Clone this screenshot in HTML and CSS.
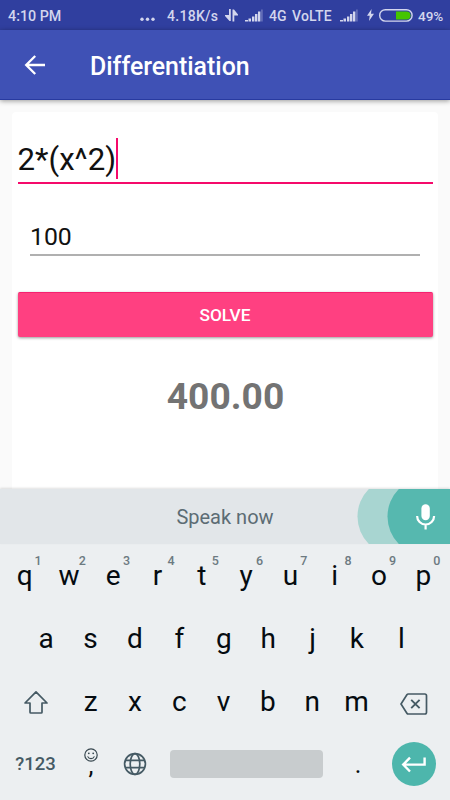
FILE: index.html
```html
<!DOCTYPE html>
<html lang="en">
<head>
<meta charset="utf-8">
<title>Differentiation</title>
<link rel="stylesheet" href="styles.css">
</head>
<body>
<div class="phone">
  <header class="status">
    <span class="clock">4:10 PM</span>
    <svg class="dots" width="15" height="5" viewBox="0 0 15 5"><circle cx="2" cy="2.3" r="1.7"/><circle cx="7.5" cy="2.3" r="1.7"/><circle cx="13" cy="2.3" r="1.7"/></svg>
    <span class="speed">4.18K/s</span>
    <svg class="updown" width="14" height="13" viewBox="0 0 14 13"><path d="M4 0h1.800v12H4.500L0 7V6h4zM7.500 12.500h1.800V6.500H13v-1L9 .5H7.500z"/></svg>
    <svg class="signal" width="18" height="13" viewBox="0 0 18 13"><path d="M0 11h3v1.500H0zM3.500 9.500h2.500v3H3.500zM7 7.500h2.400v5H7zM10 5h2.400v7.500H10zM13 2.500h2.400v10H13z"/><path class="dim" d="M16 .5h1.800v12H16z"/></svg>
    <span class="net">4G</span>
    <span class="volte">VoLTE</span>
    <svg class="signal" width="18" height="13" viewBox="0 0 18 13"><path d="M0 11h3v1.500H0zM3.500 9.500h2.500v3H3.500zM7 7.500h2.400v5H7zM10 5h2.400v7.500H10zM13 2.500h2.400v10H13z"/><path class="dim" d="M16 .5h1.800v12H16z"/></svg>
    <svg class="bolt" width="7" height="12" viewBox="0 0 7 12"><path d="M4.600 0L0 6.800h2.700L2 12l5-7.200H4z"/></svg>
    <svg class="battery" width="34" height="13" viewBox="0 0 34 13"><rect x=".7" y=".7" width="32.400" height="11.400" rx="5.700" fill="none" stroke="#d3d6ed" stroke-width="1.400"/><path d="M17 2.400h10.500a4 4 0 0 1 0 8H17z" fill="#45c500"/></svg>
    <span class="percent">49%</span>
  </header>

  <div class="toolbar">
    <svg class="back" width="22" height="22" viewBox="0 0 22 22"><path d="M21 11H2.500M11.200 2l-9 9 9 9" fill="none" stroke="#fff" stroke-width="2.300"/></svg>
    <h1>Differentiation</h1>
  </div>

  <main>
    <section class="card">
      <div class="field expr"><span>2*(x^2)</span><i class="caret"></i></div>
      <div class="field value"><span>100</span></div>
      <button class="solve">SOLVE</button>
      <output class="result">400.00</output>
    </section>
  </main>

  <div class="voice">
    <svg class="mic" width="93" height="55" viewBox="0 0 93 55"><circle cx="39.500" cy="27.500" r="39" fill="#a8d5d1"/><circle cx="69.500" cy="27.500" r="39" fill="#56b8af"/><rect x="64.400" y="15.200" width="8.400" height="16" rx="4.200" fill="#fff"/><path d="M60.100 27a8.500 8.500 0 0 0 17 0M68.600 35.500v5" fill="none" stroke="#fff" stroke-width="2.200"/></svg>
    <span>Speak now</span>
  </div>

  <div class="keyboard">
    <div class="keys top">
      <b>q<sup>1</sup></b><b>w<sup>2</sup></b><b>e<sup>3</sup></b><b>r<sup>4</sup></b><b>t<sup>5</sup></b><b>y<sup>6</sup></b><b>u<sup>7</sup></b><b>i<sup>8</sup></b><b>o<sup>9</sup></b><b>p<sup>0</sup></b>
    </div>
    <div class="keys home"><b>a</b><b>s</b><b>d</b><b>f</b><b>g</b><b>h</b><b>j</b><b>k</b><b>l</b></div>
    <div class="keys lower">
      <b><svg width="26" height="25" viewBox="0 0 26 25"><path d="M13 1.800L2 13h5v9.200q0 .8.8.8h10.400q.8 0 .8-.8V13h5z" fill="none" stroke="#455a64" stroke-width="1.700" stroke-linejoin="round"/></svg></b>
      <b>z</b><b>x</b><b>c</b><b>v</b><b>b</b><b>n</b><b>m</b>
      <b><svg width="28" height="22" viewBox="0 0 28 22"><path d="M8.300 1h16.500q1.700 0 1.700 1.700v16.600q0 1.700-1.700 1.700H8.300q-.9 0-1.400-.8L1 11l5.900-9.200Q7.400 1 8.300 1z" fill="none" stroke="#455a64" stroke-width="1.700"/><path d="M11.200 6.800l8.400 8.400m0-8.400l-8.400 8.400" stroke="#455a64" stroke-width="1.900"/></svg></b>
    </div>
    <div class="keys bottom">
      <span class="sym">?123</span>
      <span class="comma"><svg width="14" height="14" viewBox="0 0 14 14"><circle cx="7" cy="7" r="6.200" fill="none" stroke="#37474f" stroke-width="1.200"/><circle cx="4.800" cy="5.300" r=".9" fill="#37474f"/><circle cx="9.200" cy="5.300" r=".9" fill="#37474f"/><path d="M3.600 8.400a3.700 3.700 0 0 0 6.800 0" fill="none" stroke="#37474f" stroke-width="1.100"/></svg><span>,</span></span>
      <svg class="globe" width="24" height="24" viewBox="0 0 24 24" fill="none" stroke="#455a64" stroke-width="1.700"><circle cx="12" cy="12" r="10.400"/><ellipse cx="12" cy="12" rx="4.800" ry="10.400"/><path d="M2.200 8.300h19.600M2.200 15.700h19.600"/></svg>
      <span class="space"></span>
      <span class="period">.</span>
      <span class="enter"><svg width="26" height="18" viewBox="0 0 26 18"><path d="M23.600 2.500v7.100H3.500M9 2.700L2.200 9.600 9 16.500" fill="none" stroke="#fff" stroke-width="2.400"/></svg></span>
    </div>
  </div>
</div>
</body>
</html>
```
FILE: styles.css
```css
* { box-sizing: border-box; }
body { margin: 0; font-family: Roboto, "Liberation Sans", sans-serif; }
svg { display: block; flex: none; }
.phone { width: 450px; height: 800px; overflow: hidden; display: flex; flex-direction: column; background: #fafafa; }

.status { height: 30px; background: #303f9f; display: flex; align-items: center; padding: 2px 0 0 8px; color: #d3d6ed; font-size: 14px; font-weight: 500; line-height: 28px; white-space: nowrap; }
.status svg { fill: #d3d6ed; }
.status span { flex: none; }
.clock { width: 132px; font-size: 14.3px; }
.dots { margin-top: 7px; }
.speed { width: 58px; margin-left: 12px; letter-spacing: .3px; }
.updown { margin: -2px 6px 0 0; }
.signal { margin-top: -1px; }
.dim { opacity: .3; }
.net { width: 23px; margin-left: 6px; }
.volte { width: 48px; letter-spacing: .2px; }
.bolt { margin: -3px 0 0 9px; }
.battery { margin: -2px 0 0 5px; }
.percent { margin: -1px 0 0 5px; font-size: 13.5px; }

.toolbar { position: relative; height: 70px; background: #3f51b5; border-bottom: 1px solid #283aa0; box-shadow: 0 1px 5px rgba(0,0,0,.4); display: flex; align-items: center; padding-left: 24px; }
.back { margin-top: 1px; }
h1 { margin: 4px 0 0 44px; font-size: 24.9px; font-weight: 500; color: #fff; line-height: 30px; white-space: nowrap; }

main { height: 389px; padding: 12px 12px 0; }
.card { height: 100%; background: #fff; border-radius: 4px 4px 0 0; padding: 24px 5.5px 0; display: flex; flex-direction: column; }
.field { display: flex; align-items: center; color: #111; }
.expr { height: 48px; border-bottom: 2px solid #f50a6b; font-size: 31.2px; line-height: 44px; }
.expr span { padding-top: 2px; }
.caret { width: 2px; height: 41px; background: #f50a6b; margin-top: -1px; }
.value { margin: 34px 12.5px 0; height: 38px; border-bottom: 2px solid #b0b0b0; font-size: 24.8px; line-height: 34px; padding-top: 2px; }
.solve { margin: 36px 0 0; height: 45px; border: 0; border-top: 1px solid #f5206f; border-radius: 2px; background: #ff4081; box-shadow: 0 1px 3px rgba(0,0,0,.4); color: #fff; font: 500 17.3px/42px Roboto, sans-serif; padding: 0; }
.result { margin-top: 37px; text-align: center; color: #737373; font-size: 37.2px; font-weight: 700; line-height: 44px; padding-left: 1px; }

.voice { position: relative; height: 55px; background: #e2e6e9; box-shadow: 0 -1px 2px rgba(0,0,0,.12); display: flex; align-items: center; justify-content: center; color: #5c6c74; font-size: 20px; line-height: 53px; }
.voice span { padding-top: 2px; }
.mic { position: absolute; right: 0; top: 0; }

.keyboard { height: 256px; background: #eceff1; }
.keys { height: 63px; line-height: 63px; display: grid; font-size: 28px; color: #050b10; }
.keys b { position: relative; font-weight: 400; display: flex; align-items: center; justify-content: center; }
.top { grid-template-columns: repeat(10, 44.3px); padding-left: 2.5px; }
.home { grid-template-columns: repeat(9, 44.4px); padding-left: 24px; }
.lower { grid-template-columns: 55px repeat(7, 44.3px) 57px; padding-left: 13.5px; }
.lower b:first-child { justify-content: flex-start; padding: 2px 0 0 9px; }
.lower b:last-child { padding: 4px 0 0 10px; justify-content: flex-start; margin-left: 11px; }
sup { position: absolute; left: 32px; top: 8px; font-size: 12.5px; line-height: 18px; font-weight: 500; color: #6c7a81; }
.bottom { grid-template-columns: 68px 45px 44px 179px 44px 68px; align-items: center; justify-items: center; }
.sym { font-size: 18.5px; font-weight: 500; color: #455a64; margin-left: 3px; }
.comma { height: 63px; margin-left: 1px; display: flex; flex-direction: column; align-items: center; padding-top: 15px; }
.comma span { line-height: 28px; margin-top: -10px; font-size: 25px; }
.globe { margin-top: -2px; }
.space { width: 153px; height: 28px; background: #c8ccce; border-radius: 4px; margin-top: -2px; }
.period { font-size: 25px; }
.enter { width: 44px; height: 44px; border-radius: 50%; background: #4db6ac; display: flex; align-items: center; justify-content: center; margin-top: -2px; }
```
